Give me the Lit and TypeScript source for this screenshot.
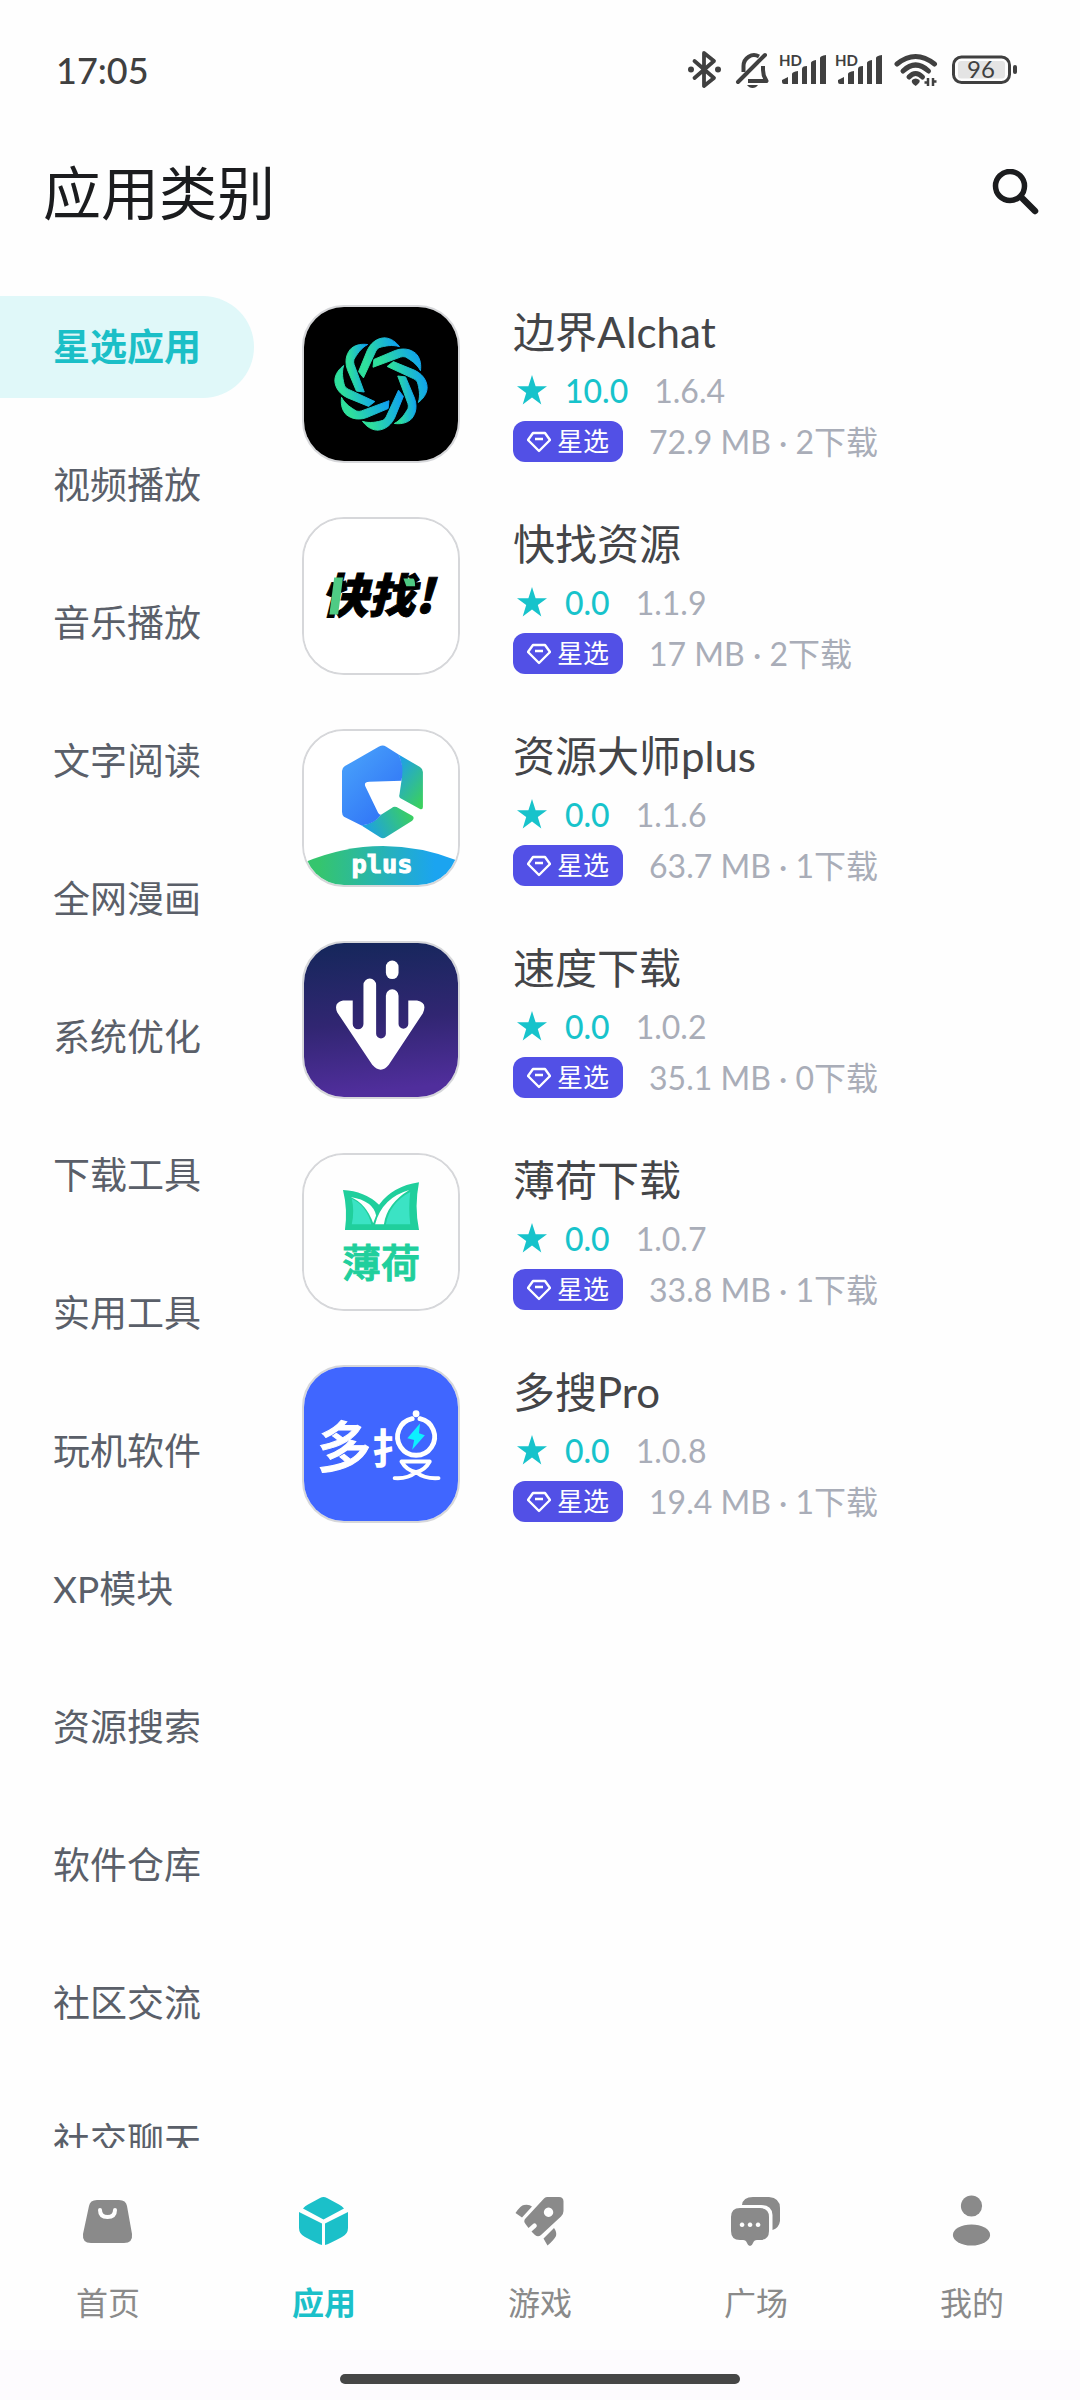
import { LitElement, html, svg, css, TemplateResult } from "lit";
import { customElement, property, state } from "lit/decorators.js";
import { classMap } from "lit/directives/class-map.js";

interface AppItem {
  name: string;
  score: string;
  version: string;
  meta: string;
  icon: TemplateResult;
}

interface Tab {
  label: string;
  icon: TemplateResult;
}

/* ---------- app logos ---------- */

const PETALS = 8;

/** One ribbon of the knot, turned about the centre of the tile. */
function petal(index: number): string {
  const a = (index * 2 * Math.PI) / PETALS;
  const p = (x: number, y: number): string => {
    const px = 79 + (x * Math.cos(a) - y * Math.sin(a)) / 3;
    const py = 79 + (x * Math.sin(a) + y * Math.cos(a)) / 3;
    return `${px.toFixed(1)} ${py.toFixed(1)}`;
  };
  return `M${p(-69, -38)} L${p(-42, -104)} C${p(-27, -136)} ${p(0, -143)} ${p(14, -142)} C${p(32, -140)} ${p(46, -129)} ${p(57, -115)} C${p(34, -122)} ${p(12, -117)} ${p(-6, -112)} Q${p(-13, -108)} ${p(-16, -101)} L${p(-54, -19)} Z`;
}

const knotLogo = html`<svg class="logo" viewBox="0 0 158 158" aria-hidden="true">
  <defs>
    <linearGradient id="knot" x1="0" x2="1" y1="0.3" y2="0.1">
      <stop offset="0.1" stop-color="#2fe09c" />
      <stop offset="1" stop-color="#0d9df6" />
    </linearGradient>
  </defs>
  <rect width="158" height="158" fill="#000" />
  ${Array.from({ length: PETALS }, (_, i) => svg`<path d=${petal(i)} fill="url(#knot)" stroke="url(#knot)" />`)}
</svg>`;

const findLogo = html`<svg class="logo" viewBox="0 0 158 158" aria-hidden="true">
  <rect width="158" height="158" fill="#fff" />
  <text class="find" x="18" y="96">快找!</text>
  <path d="M31 60H40L35 98H26Z" fill="#4fcb84" />
  <path d="M102 61H112Q114 62 114 69H105Z" fill="#4fcb84" />
</svg>`;

const plusLogo = html`<svg class="logo" viewBox="0 0 158 158" aria-hidden="true">
  <defs>
    <linearGradient id="hexBlue" x1="0" x2="0.8" y1="0" y2="1">
      <stop offset="0" stop-color="#4ba6fb" />
      <stop offset="1" stop-color="#2e70f6" />
    </linearGradient>
    <linearGradient id="hexGreen" x1="0.2" x2="0.8" y1="0" y2="1">
      <stop offset="0" stop-color="#1f9fe8" />
      <stop offset="1" stop-color="#3bd05e" />
    </linearGradient>
    <linearGradient id="hexBase" x1="0" x2="1" y1="0.6" y2="0.3">
      <stop offset="0" stop-color="#1c9eea" />
      <stop offset="1" stop-color="#3bd05e" />
    </linearGradient>
    <linearGradient id="banner">
      <stop offset="0.1" stop-color="#35c56e" />
      <stop offset="0.85" stop-color="#1ba4f0" />
    </linearGradient>
  </defs>
  <rect width="158" height="158" fill="#fff" />
  <path d="M97 24L119 37Q122 39 122 42V78Q122 81 119 80L99 69Q97 68 98 65L100 51Q102 36 97 24Z" fill="url(#hexGreen)" />
  <path d="M59 97Q72 95 79 86L90 79Q92 77 95 78L111 87Q114 89 111 92L84 109Q81 111 78 109Z" fill="url(#hexBase)" />
  <path d="M77 16Q81 14 84 16L97 24Q103 36 100 51L67 52Q61 52 63 57L76 84Q77 86 79 86Q72 96 59 97L41 88Q39 86 39 83V41Q39 38 42 36Z" fill="url(#hexBlue)" />
  <path d="M0 135Q78 102 158 133V158H0Z" fill="url(#banner)" />
  <text class="plus" x="80" y="146">plus</text>
</svg>`;

const speedLogo = html`<svg class="logo" viewBox="0 0 158 158" aria-hidden="true">
  <defs>
    <linearGradient id="night" x1="0" x2="0.1" y1="0" y2="1">
      <stop offset="0" stop-color="#14275a" />
      <stop offset="0.55" stop-color="#312672" />
      <stop offset="1" stop-color="#502e9c" />
    </linearGradient>
  </defs>
  <rect width="158" height="158" fill="url(#night)" />
  <rect x="84" y="18" width="13" height="19" rx="6.5" fill="#fff" />
  <path
    d="M50 59H40Q30 61 34 71L70 125Q79 135 87 125L122 72Q127 61 116 59H107V83A5 5 0 0 1 97 83V54A6.5 6.5 0 0 0 84 54V93A5 5 0 0 1 74 93V43A6.5 6.5 0 0 0 61 43V83A5.5 5.5 0 0 1 50 83Z"
    fill="#fff"
  />
</svg>`;

const mintLogo = html`<svg class="logo" viewBox="0 0 158 158" aria-hidden="true">
  <rect width="158" height="158" fill="#fefefe" />
  <path d="M40 36Q62 37 77 51Q91 32 118 28Q113 53 118 77H42Q45 56 40 36Z" fill="#20cf9c" />
  <path d="M48 43Q71 47 74 62L71 70Q64 50 48 43Z" fill="#fff" />
  <path d="M49 45Q64 52 69 71H49Q52 58 49 45Z" fill="#3be3c4" />
  <path d="M108 36Q80 44 73 71H82Q85 50 108 36Z" fill="#fff" />
  <path d="M109 38Q88 49 84 71H109Q107 54 109 38Z" fill="#3be3c4" />
  <text class="mint" x="79" y="125">薄荷</text>
</svg>`;

const searchLogo = html`<svg class="logo" viewBox="0 0 158 158" aria-hidden="true">
  <rect width="158" height="158" fill="#4066ff" />
  <text class="duo" x="13" y="103">多</text>
  <text class="hand" x="69" y="100">扌</text>
  <g fill="none" stroke="#fff" stroke-width="5" stroke-linecap="round" stroke-linejoin="round">
    <path d="M119 53A19 19 0 1 1 111 53" />
    <path d="M100 97H129Q124 106 115 108Q105 106 100 97ZM93 114Q106 115 115 108Q124 115 138 114" stroke-width="4" />
  </g>
  <circle cx="115" cy="48" r="3.5" fill="#fff" />
  <path d="M119 58L106 73L113 75L111 85L124 70L118 68Z" fill="#0df0ff" />
</svg>`;

/* ---------- interface icons ---------- */

const gemIcon = html`<svg class="gem" viewBox="0 0 24 22" aria-hidden="true">
  <path d="M6 2H18L23 9L12 20L1 9Z M8 8H16" fill="none" stroke="#fff" stroke-width="2.4" stroke-linejoin="round" />
</svg>`;

const starIcon = html`<svg class="star" viewBox="0 0 30 30" aria-hidden="true">
  <path d="M15 0L18.6 11.2H30L20.8 18.1L24.3 29.5L15 22.5L5.7 29.5L9.2 18.1L0 11.2H11.4Z" fill="#17c3cb" />
</svg>`;

const signalIcon = html`<svg class="signal" viewBox="0 0 47 40" aria-hidden="true">
  <text class="hd" x="0" y="16">HD</text>
  <path
    d="M3 30L9 27V34H5Q3 34 3 32ZM13 24Q13 22 19 21V34H13ZM23 19Q23 16 28 16V34H23ZM32 13Q32 11 37 10V34H32ZM41 8Q41 6 47 5V34H41Z"
    fill="#404040"
  />
</svg>`;

const TABS: Tab[] = [
  {
    label: "首页",
    icon: svg`<path d="M17 7H39Q46 7 47 13L52 41Q53 50 44 50H11Q2 50 3 41L9 13Q10 7 17 7Z" />
      <path class="cut" d="M20 17Q20 24 27.500 24T35 17" />`,
  },
  {
    label: "应用",
    icon: svg`<path d="M7 15.500Q9 13 12 11.500L24 5Q27.500 3 31 5L43 11.500Q46 13 48 15.500L27.500 26.500ZM3 19L26 30.500V52Q22 51 9 44Q3 41 3 35ZM52 19L29 30.500V52Q33 51 46 44Q52 41 52 35Z" />`,
  },
  {
    label: "游戏",
    icon: svg`<path fill-rule="evenodd" d="M35 4H47Q51.500 4 51.500 8.500V18Q51.500 21 49 23.500L29 42Q26 44.500 23 42L19.500 38.500L24 34.500A2 2 0 0 0 21 31L16.500 35L13.500 31Q11 28 13.500 25.500L32 5.500Q33 4 35 4ZM36.500 14.500A4.700 4.700 0 1 0 36.600 14.500Z" />
      <path d="M3.500 20Q9 12 12 12Q17 11 20 13.500L10 24.500ZM31.500 45.500L42 35Q45 39 44 43Q42 47 35.500 52.500Z" />`,
  },
  {
    label: "广场",
    icon: svg`<path d="M14 12Q15 4 25 4H41Q52 5 52 15V28Q51 35 44.500 37V22Q44 12 33 12Z" />
      <path fill-rule="evenodd" d="M12 15H32Q41 15 41 24V38Q41 47 32 47H29Q26 47 25 50T22 53T19 50T15 47H12Q3 47 3 38V24Q3 15 12 15ZM14 29.500A2.300 2.300 0 1 0 14.100 29.500ZM22 29.500A2.300 2.300 0 1 0 22.100 29.500ZM30 29.500A2.300 2.300 0 1 0 30.100 29.500Z" />`,
  },
  {
    label: "我的",
    icon: svg`<circle cx="27.500" cy="13" r="10.600" /><ellipse cx="27.500" cy="42" rx="18.600" ry="10.500" />`,
  },
];

const CATEGORIES = [
  "星选应用", "视频播放", "音乐播放", "文字阅读", "全网漫画", "系统优化", "下载工具",
  "实用工具", "玩机软件", "XP模块", "资源搜索", "软件仓库", "社区交流", "社交聊天",
];

const APPS: AppItem[] = [
  { name: "边界AIchat", score: "10.0", version: "1.6.4", meta: "72.9 MB · 2下载", icon: knotLogo },
  { name: "快找资源", score: "0.0", version: "1.1.9", meta: "17 MB · 2下载", icon: findLogo },
  { name: "资源大师plus", score: "0.0", version: "1.1.6", meta: "63.7 MB · 1下载", icon: plusLogo },
  { name: "速度下载", score: "0.0", version: "1.0.2", meta: "35.1 MB · 0下载", icon: speedLogo },
  { name: "薄荷下载", score: "0.0", version: "1.0.7", meta: "33.8 MB · 1下载", icon: mintLogo },
  { name: "多搜Pro", score: "0.0", version: "1.0.8", meta: "19.4 MB · 1下载", icon: searchLogo },
];

@customElement("status-bar")
export class StatusBar extends LitElement {
  static styles = css`
    :host {
      display: flex;
      align-items: center;
      justify-content: space-between;
      height: 140px;
      padding: 0 63px 0 56px;
      color: #404040;
    }
    .time {
      font-size: 36px;
      font-weight: 500;
      line-height: 40px;
    }
    .icons {
      display: flex;
      gap: 9px;
    }
    svg {
      display: block;
      height: 40px;
    }
    .hd {
      font: 700 15px Lato, "Liberation Sans", sans-serif;
      fill: #404040;
    }
    .level {
      font: 400 24px Lato, "Liberation Sans", sans-serif;
      fill: #404040;
      text-anchor: middle;
    }
  `;

  render() {
    return html`
      <span class="time">17:05</span>
      <div class="icons">
        <svg viewBox="0 0 34 40" aria-hidden="true">
          <path d="M7.500 11L27 28L17 36V3L27 11L7.500 28" fill="none" stroke="#404040" stroke-width="3.800" stroke-linejoin="round" stroke-linecap="round" />
          <circle cx="4" cy="19.500" r="3" fill="#404040" />
          <circle cx="31" cy="19.500" r="3" fill="#404040" />
        </svg>
        <svg viewBox="0 0 40 40" aria-hidden="true">
          <g fill="none" stroke="#404040" stroke-width="4" stroke-linecap="round">
            <path d="M35 5L8 32" />
            <path d="M13.500 22V16A10.500 11 0 0 1 29 6.500" stroke-linecap="butt" />
            <path d="M33 16V20Q33 26 36.500 31H18" stroke-linejoin="round" stroke-linecap="butt" />
          </g>
          <path d="M17 35H28Q26 38 22.500 38T17 35Z" fill="#404040" />
        </svg>
        ${signalIcon}${signalIcon}
        <svg viewBox="0 0 51 40" aria-hidden="true">
          <g fill="none" stroke="#404040" stroke-width="5" stroke-linecap="round">
            <path d="M6 14Q24.500 -1 43.500 14" />
            <path d="M12 21Q24.500 9 37.500 21" />
            <path d="M18 27Q24.500 20 31.500 27" />
          </g>
          <path d="M21 30Q24.500 27 28.500 30Q29.500 32 27 34L24.700 36L22 34Q20 32 21 30Z" fill="#404040" />
          <path d="M33.500 32.500H37V28M37 29V36M42 28V36M41.500 31.500H45.500" fill="none" stroke="#404040" stroke-width="2.500" />
        </svg>
        <svg viewBox="0 0 66 40" aria-hidden="true">
          <rect x="2.500" y="7" width="56" height="25.500" rx="8" fill="none" stroke="#404040" stroke-width="3" />
          <rect x="7" y="11" width="47" height="17.500" rx="3" fill="#e4e4e4" />
          <rect x="62" y="15" width="4" height="9" rx="2" fill="#404040" />
          <text class="level" x="30" y="28">96</text>
        </svg>
      </div>
    `;
  }
}

@customElement("app-row")
export class AppRow extends LitElement {
  @property({ attribute: false }) item!: AppItem;

  static styles = css`
    :host {
      display: block;
    }
    .row {
      display: flex;
      gap: 53px;
      color: inherit;
      text-decoration: none;
    }
    .tile {
      flex: none;
      box-sizing: border-box;
      width: 158px;
      height: 158px;
      border: 2px solid #d6d7da;
      border-radius: 42px;
      overflow: hidden;
    }
    .logo {
      display: block;
      width: 100%;
      height: 100%;
    }
    .info {
      min-width: 0;
    }
    .name {
      margin: 0;
      font-size: 42px;
      font-weight: 400;
      line-height: 54px;
      color: #444548;
      white-space: nowrap;
    }
    .rating {
      display: flex;
      align-items: center;
      height: 62px;
      font-size: 32px;
    }
    .star {
      width: 30px;
      height: 30px;
      margin: 0 18px 0 4px;
    }
    .score {
      margin-right: 26px;
      color: #17c3cb;
      font-weight: 500;
    }
    .soft {
      color: #a9adb8;
    }
    .details {
      display: flex;
      align-items: center;
      gap: 26px;
      font-size: 32px;
      line-height: 41px;
      white-space: nowrap;
    }
    .badge {
      display: flex;
      align-items: center;
      gap: 6px;
      padding: 0 14px;
      border-radius: 12px;
      background: #5250e6;
      color: #fff;
      font-size: 26px;
    }
    .gem {
      width: 24px;
      height: 22px;
    }
    .find {
      font: italic 900 48px "Noto Sans CJK SC", sans-serif;
      fill: #000;
      stroke: #000;
      stroke-width: 1px;
    }
    .plus {
      font: 700 26px "DejaVu Sans Mono", monospace;
      fill: #fff;
      stroke: #fff;
      stroke-width: 1px;
      text-anchor: middle;
    }
    .mint {
      font: 500 40px "Noto Sans CJK SC", sans-serif;
      fill: #20cf9c;
      stroke: #20cf9c;
      stroke-width: 1px;
      text-anchor: middle;
    }
    .duo {
      font: 500 56px "Noto Sans CJK SC", sans-serif;
      fill: #fff;
      stroke: #fff;
      stroke-width: 1px;
    }
    .hand {
      font: 700 42px "Noto Sans CJK SC", sans-serif;
      fill: #fff;
    }
  `;

  render() {
    const { name, score, version, meta, icon } = this.item;
    return html`
      <a class="row" href="#">
        <div class="tile">${icon}</div>
        <div class="info">
          <h2 class="name">${name}</h2>
          <div class="rating">
            ${starIcon}<span class="score">${score}</span><span class="soft">${version}</span>
          </div>
          <div class="details">
            <span class="badge">${gemIcon}星选</span><span class="soft">${meta}</span>
          </div>
        </div>
      </a>
    `;
  }
}

@customElement("app-root")
export class AppRoot extends LitElement {
  @state() private category = 0;
  @state() private tab = 1;

  static styles = css`
    :host {
      display: flex;
      flex-direction: column;
      height: 100vh;
      overflow: hidden;
      background: #fefefe;
      font-family: Lato, "Noto Sans CJK SC", sans-serif;
    }
    button {
      border: 0;
      background: none;
      font: inherit;
      cursor: pointer;
    }
    .header {
      display: flex;
      align-items: center;
      justify-content: space-between;
      flex: none;
      height: 106px;
      padding: 0 40px 0 43px;
    }
    .title {
      margin: 0;
      font-size: 58px;
      font-weight: 400;
      line-height: 80px;
      color: #1b1c1e;
    }
    .search {
      padding: 0;
    }
    .search svg {
      display: block;
      width: 48px;
      height: 48px;
    }
    .main {
      display: flex;
      flex: 1;
      min-height: 0;
      gap: 48px;
    }
    .categories {
      display: flex;
      flex-direction: column;
      flex: none;
      gap: 36px;
      width: 254px;
      padding-top: 50px;
      overflow-y: auto;
      scrollbar-width: none;
    }
    .category {
      flex: none;
      height: 102px;
      padding: 0 0 4px 53px;
      border-radius: 0 51px 51px 0;
      font-size: 37px;
      text-align: left;
      color: #5a5f69;
      white-space: nowrap;
    }
    .category.active {
      background: #e0f8f9;
      color: #1bbfc7;
      font-weight: 500;
    }
    .list {
      display: flex;
      flex-direction: column;
      flex: 1;
      gap: 54px;
      min-width: 0;
      padding-top: 59px;
      overflow-y: auto;
      scrollbar-width: none;
    }
    .tabs {
      display: grid;
      grid-template-columns: repeat(5, 1fr);
      flex: none;
      height: 157px;
      padding-top: 45px;
    }
    .tab {
      display: flex;
      flex-direction: column;
      align-items: center;
      gap: 38px;
      color: #8a8a8a;
      font-size: 32px;
      line-height: 32px;
      text-decoration: none;
    }
    .tab.active {
      color: #1bc0c9;
      font-weight: 700;
    }
    .tab svg {
      width: 56px;
      height: 56px;
      fill: currentColor;
    }
    .tab .cut {
      fill: none;
      stroke: #fefefe;
      stroke-width: 4px;
      stroke-linecap: round;
    }
    .category.active {
      font-weight: 700;
    }
    .home {
      display: flex;
      justify-content: center;
      flex: none;
      height: 26px;
      padding-top: 24px;
      background: #fdfbfe;
    }
    .handle {
      width: 37%;
      height: 10px;
      border-radius: 5px;
      background: #464646;
    }
  `;

  render() {
    return html`
      <status-bar></status-bar>
      <header class="header">
        <h1 class="title">应用类别</h1>
        <button class="search" aria-label="搜索">
          <svg viewBox="0 0 48 48" aria-hidden="true">
            <g fill="none" stroke="#1b1c1e">
              <circle cx="18" cy="17" r="14.500" stroke-width="5.500" />
              <path d="M31 30L43 42" stroke-width="6.500" stroke-linecap="round" />
            </g>
          </svg>
        </button>
      </header>
      <main class="main">
        <nav class="categories">
          ${CATEGORIES.map(
            (name, i) => html`<button
              class=${classMap({ category: true, active: i === this.category })}
              @click=${() => (this.category = i)}
            >${name}</button>`
          )}
        </nav>
        <section class="list">
          ${APPS.map((item) => html`<app-row .item=${item}></app-row>`)}
        </section>
      </main>
      <nav class="tabs">
        ${TABS.map(
          (t, i) => html`<a
            href="#"
            class=${classMap({ tab: true, active: i === this.tab })}
            @click=${() => (this.tab = i)}
          ><svg viewBox="0 0 56 56" aria-hidden="true">${t.icon}</svg>${t.label}</a>`
        )}
      </nav>
      <footer class="home"><div class="handle"></div></footer>
    `;
  }
}
